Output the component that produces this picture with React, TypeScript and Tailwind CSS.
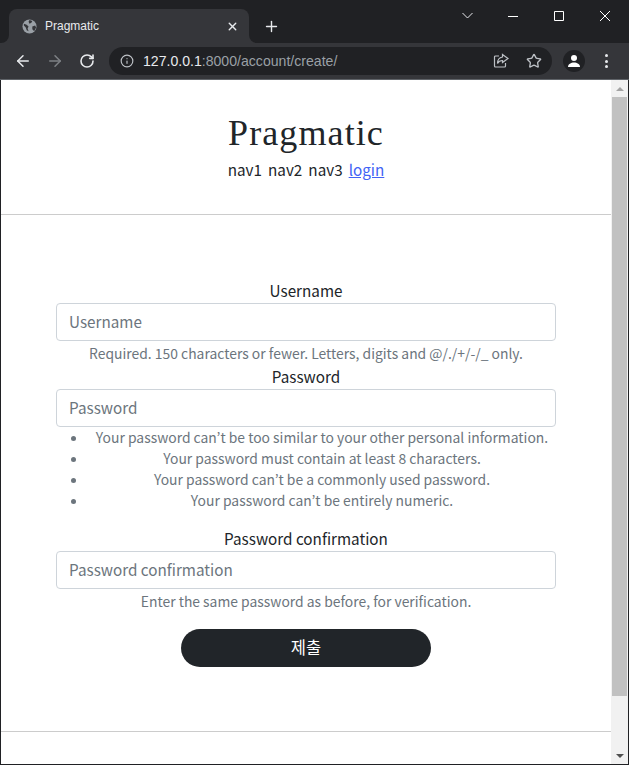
import { ArrowLeft, ArrowRight, Info, Plus, RotateCw, Star, X } from "lucide-react";

const sans = "font-['Noto_Sans_CJK_KR','Noto_Sans',sans-serif]";

function Field({ label, help }: { label: string; help?: string }) {
  return (
    <div className="flex flex-col">
      <label className="h-[24px] text-center text-[15.25px] leading-[22px] text-[#212529]">{label}</label>
      <input
        placeholder={label}
        className="h-[38px] w-full rounded-[4px] border border-[#ced4da] bg-white px-3 pb-[2px] text-[15.25px] leading-[24px] placeholder:text-[#6c757d]"
      />
      {help && <div className="mt-[2px] h-[22px] text-center text-[13.9px] leading-[21px] text-[#6c757d]">{help}</div>}
    </div>
  );
}

export default function App() {
  const rules = [
    "Your password can’t be too similar to your other personal information.",
    "Your password must contain at least 8 characters.",
    "Your password can’t be a commonly used password.",
    "Your password can’t be entirely numeric.",
  ];

  return (
    <div className={`flex h-[765px] w-[629px] flex-col overflow-hidden bg-white ${sans}`}>
      {/* Browser chrome */}
      <div className="flex h-[43px] shrink-0 items-end bg-[#202124]">
        <div className="relative ml-[9px] flex h-[34px] w-[240px] items-center rounded-t-[8px] bg-[#35363a] pl-[13px] pr-[10px]">
          <div className="absolute bottom-0 left-[-8px] h-[8px] w-[8px] bg-[#35363a]">
            <div className="h-full w-full rounded-br-[8px] bg-[#202124]" />
          </div>
          <div className="absolute bottom-0 right-[-8px] h-[8px] w-[8px] bg-[#35363a]">
            <div className="h-full w-full rounded-bl-[8px] bg-[#202124]" />
          </div>
          <svg width="15" height="15" viewBox="0 0 16 16" className="shrink-0">
            <circle cx="8" cy="8" r="7.5" fill="#9aa0a6" />
            <path d="M2 5l3 1 2 2-1 2 1 3-2-1-1-3-2-2zM8 1l3 1-1 2-2 1-1-2zM11 8l3-1 1 2-2 4-2-2z" fill="#35363a" />
          </svg>
          <span className="ml-[8px] flex-1 font-['Liberation_Sans',sans-serif] text-[12px] text-[#e8eaed]">Pragmatic</span>
          <X size={13} strokeWidth={2.5} className="text-[#e8eaed]" />
        </div>
        <Plus size={17} strokeWidth={2} className="mb-[8px] ml-[14px] text-[#e8eaed]" />
        <div className="ml-auto flex items-center self-start pr-[19px] pt-[10px]">
          <svg width="11" height="11" viewBox="0 0 11 11" fill="none" stroke="#e8eaed" strokeWidth="1">
            <path d="M0.500 3l5 5 5-5" />
          </svg>
          <svg width="10" height="10" viewBox="0 0 10 10" stroke="#ffffff" strokeWidth="1" className="ml-[35px]">
            <path d="M0 5.500h10" />
          </svg>
          <svg width="10" height="10" viewBox="0 0 10 10" fill="none" stroke="#ffffff" strokeWidth="1" className="ml-[36px]">
            <path d="M0.500 0.500h9v9h-9z" />
          </svg>
          <svg width="10" height="10" viewBox="0 0 10 10" stroke="#ffffff" strokeWidth="1" className="ml-[36px]">
            <path d="M0 0l10 10M10 0L0 10" />
          </svg>
        </div>
      </div>
      <div className="flex h-[37px] shrink-0 items-center border-b border-[#5f6368] bg-[#35363a] pl-[14px] pr-[16px]">
        <ArrowLeft size={18} strokeWidth={2} className="text-[#e8eaed]" />
        <ArrowRight size={18} strokeWidth={2} className="ml-[14px] text-[#7e8185]" />
        <RotateCw size={16} strokeWidth={2.400} className="ml-[15px] text-[#e8eaed]" />
        <div className="ml-[14px] flex h-[28px] w-[443px] items-center rounded-full bg-[#202124] pl-[11px] pr-[10px]">
          <Info size={14} className="text-[#bdc1c6]" />
          <span className="ml-[9px] flex-1 pt-[1px] font-['Liberation_Sans',sans-serif] text-[14.1px] text-[#e8eaed]">
            127.0.0.1<span className="text-[#9aa0a6]">:8000/account/create/</span>
          </span>
          <svg width="16" height="16" viewBox="0 0 16 16" fill="none" stroke="#bdc1c6" strokeWidth="1.200">
            <path d="M6 3H2.500A1 1 0 0 0 1.500 4v9a1 1 0 0 0 1 1h9a1 1 0 0 0 1-1v-3" />
            <path d="M9.500 1.500L15 5.500l-5.500 4V7.500C7 7.500 5.500 8.500 4.500 10.500 4.500 7 6.500 4.500 9.500 4z" />
          </svg>
          <Star size={16} strokeWidth={2} className="ml-[17px] text-[#bdc1c6]" />
        </div>
        <div className="ml-[11px] flex h-[22px] w-[22px] items-center justify-center rounded-full bg-[#202124]">
          <svg width="14" height="14" viewBox="0 0 14 14" fill="#ffffff">
            <circle cx="7" cy="4" r="3" />
            <path d="M1 13c0-3 3-4.500 6-4.500s6 1.500 6 4.500z" />
          </svg>
        </div>
        <div className="ml-[20px] flex flex-col gap-[2.500px]">
          <span className="h-[3px] w-[3px] rounded-full bg-[#e8eaed]" />
          <span className="h-[3px] w-[3px] rounded-full bg-[#e8eaed]" />
          <span className="h-[3px] w-[3px] rounded-full bg-[#e8eaed]" />
        </div>
      </div>

      {/* Page viewport */}
      <div className="flex min-h-0 flex-1 border-x border-b border-[#202124]">
        <div className="flex w-[611px] flex-col">
          <header className="flex h-[135px] shrink-0 flex-col items-center border-b border-[#ccc] pt-[29px]">
            <h1 className="font-['Liberation_Serif',serif] text-[36px] leading-[48px] tracking-[1.100px] text-[#212529]">Pragmatic</h1>
            <nav className="flex gap-[6px] text-[15.25px] leading-[24px] text-[#212529]">
              <span>nav1</span>
              <span>nav2</span>
              <span>nav3</span>
              <a href="#" className="text-[#4263f5] underline">login</a>
            </nav>
          </header>
          <main className="flex flex-1 flex-col items-center pt-[64px]">
            <form className="flex w-[500px] flex-col">
              <Field label="Username" help="Required. 150 characters or fewer. Letters, digits and @/./+/-/_ only." />
              <div className="flex flex-col">
                <Field label="Password" />
                <ul className="h-[100px] list-disc pl-[32px] text-center text-[13.9px] leading-[21px] text-[#6c757d]">
                  {rules.map((r) => (
                    <li key={r}>{r}</li>
                  ))}
                </ul>
              </div>
              <Field label="Password confirmation" help="Enter the same password as before, for verification." />
              <button type="button" className="mx-auto mt-[16px] h-[38px] w-[250px] rounded-full bg-[#212529] pb-[2px] text-[16.5px] text-white">
                제출
              </button>
            </form>
          </main>
          <div className="h-[33px] shrink-0 border-t border-[#ccc]" />
        </div>
        <div className="flex w-[17px] flex-col items-center bg-[#f1f1f1]">
          <div className="flex h-[17px] w-full items-center justify-center">
            <div className="h-0 w-0 border-x-[4px] border-b-[4px] border-x-transparent border-b-[#a3a3a3]" />
          </div>
          <div className="h-[599px] w-[15px] bg-[#c1c1c1]" />
          <div className="mt-auto flex h-[17px] w-full items-center justify-center">
            <div className="h-0 w-0 border-x-[4px] border-t-[4px] border-x-transparent border-t-[#505050]" />
          </div>
        </div>
      </div>
    </div>
  );
}
